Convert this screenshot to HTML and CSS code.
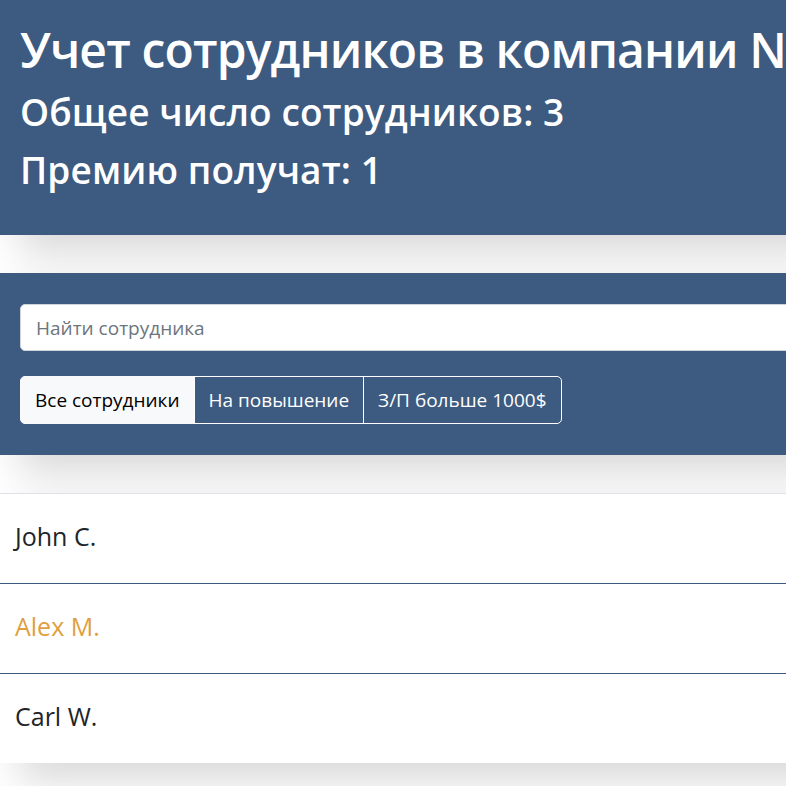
FILE: index.html
```html
<!DOCTYPE html>
<html lang="ru">
<head>
<meta charset="utf-8">
<title>Учет сотрудников</title>
<link rel="stylesheet" href="styles.css">
</head>
<body>
<div class="app">
  <div class="app-info">
    <h1 class="title">Учет сотрудников в компании N</h1>
    <h2 class="stat">Общее число сотрудников: 3</h2>
    <h2 class="stat">Премию получат: 1</h2>
  </div>

  <div class="search-panel">
    <input class="search-input" type="text" placeholder="Найти сотрудника">
    <div class="btn-group">
      <button class="btn btn-light" type="button">Все сотрудники</button>
      <button class="btn btn-outline" type="button">На повышение</button>
      <button class="btn btn-outline" type="button">З/П больше 1000$</button>
    </div>
  </div>

  <ul class="app-list">
    <li class="list-item"><span class="list-label">John C.</span></li>
    <li class="list-item increase"><span class="list-label">Alex M.</span></li>
    <li class="list-item"><span class="list-label">Carl W.</span></li>
  </ul>
</div>
</body>
</html>
```

FILE: styles.css
```css
* { box-sizing: border-box; }

html, body {
  margin: 0;
  padding: 0;
  overflow-x: hidden;
  background: #fff;
}

body {
  font-family: "Open Sans", "Noto Sans", sans-serif;
  color: #212529;
}

.app {
  width: 1000px;
  padding-bottom: 40px;
}

.app-info {
  height: 235px;
  padding: 17px 20px 0;
  background-color: #3d5a80;
  color: #fff;
  box-shadow: 19px 19px 38px rgba(0, 0, 0, 0.15);
}

.title {
  margin: 0;
  font-size: 48px;
  font-weight: 600;
  line-height: 66px;
  letter-spacing: -0.85px;
  white-space: nowrap;
}

.stat {
  margin: 0;
  font-size: 37px;
  font-weight: 600;
  line-height: 58px;
  letter-spacing: 0.1px;
}

.search-panel {
  margin-top: 38px;
  padding: 31px 20px;
  background-color: #3d5a80;
  box-shadow: 19px 19px 38px rgba(0, 0, 0, 0.15);
  display: flex;
  flex-direction: column;
  gap: 25px;
}

.search-input {
  display: block;
  width: 100%;
  height: 47px;
  padding: 0 15px;
  font-family: inherit;
  font-size: 19px;
  color: #212529;
  background: #fff;
  border: 1px solid #ced4da;
  border-radius: 5px;
  outline: none;
}

.search-input::placeholder {
  color: #6c757d;
}

.btn-group {
  display: flex;
  align-self: flex-start;
}

.btn {
  height: 48px;
  padding: 0 14px;
  font-family: inherit;
  font-size: 19px;
  line-height: 1;
  border: 1px solid #fff;
  margin: 0;
  cursor: pointer;
}

.btn + .btn {
  margin-left: -1px;
}

.btn:first-child {
  border-radius: 5px 0 0 5px;
}

.btn:last-child {
  border-radius: 0 5px 5px 0;
}

.btn-light {
  background-color: #f8f9fa;
  border-color: #f8f9fa;
  color: #000;
}

.btn-outline {
  background: transparent;
  color: #fff;
  border-color: #fff;
}

.app-list {
  list-style: none;
  margin: 38px 0 0;
  padding: 0;
  background: #fff;
  border-top: 1px solid #dee2e6;
  box-shadow: 19px 19px 38px rgba(0, 0, 0, 0.15);
}

.list-item {
  height: 90px;
  padding: 0 15px 6px;
  display: flex;
  align-items: center;
  border-bottom: 1px solid #3d5a80;
}

.list-item:last-child {
  border-bottom: none;
  height: 89px;
}

.list-label {
  font-size: 25px;
}

.increase .list-label {
  color: #e09f3e;
}
```
